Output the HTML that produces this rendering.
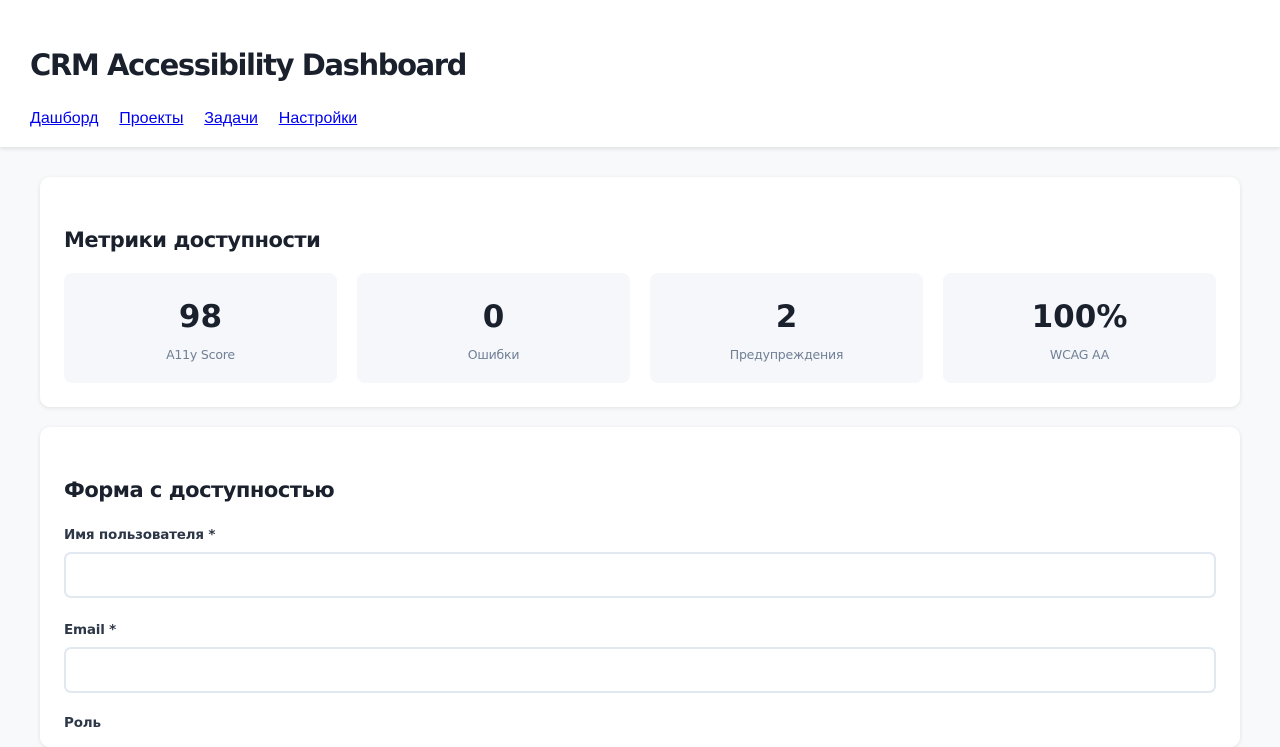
<!DOCTYPE html>
<html><head><meta charset="utf-8"><style>
*{box-sizing:border-box;margin:0;padding:0}
body{width:1280px;height:720px;overflow:hidden;background:#f8f9fa;font-family:"DejaVu Sans","Liberation Sans",sans-serif;color:#1a202c}
header{background:#fff;height:147px;box-shadow:0 2px 4px rgba(0,0,0,.1);padding:0 30px;position:relative}
h1{position:absolute;top:45px;left:30px;font-size:29px;font-weight:bold;letter-spacing:-1.4px;line-height:40px}
nav{position:absolute;top:109px;left:30px;font-size:15px}
nav a{color:#0000ee;margin-right:16px;font-family:"Liberation Sans",sans-serif;font-size:16px;text-decoration:underline}
.card{position:absolute;left:40px;width:1200px;background:#fff;border-radius:10px;box-shadow:0 1px 4px rgba(0,0,0,.1)}
h2{position:absolute;left:24px;font-size:21px;font-weight:bold;letter-spacing:-0.5px}
.m{position:absolute;top:96px;width:273px;height:110px;background:#f5f7fa;border-radius:8px;text-align:center}
.m b{display:block;margin-top:26px;font-size:31px;line-height:36px}
.m span{display:block;margin-top:12px;font-size:12.5px;color:#718096;letter-spacing:-0.2px}
label{position:absolute;left:24px;font-size:13.5px;font-weight:bold;color:#2d3748;letter-spacing:-0.2px}
.in{position:absolute;left:24px;width:1152px;height:46px;border:2px solid #e2e8f0;border-radius:7px}
</style></head><body>
<header><h1>CRM Accessibility Dashboard</h1>
<nav><a>Дашборд</a> <a>Проекты</a> <a>Задачи</a> <a>Настройки</a></nav></header>
<div class="card" style="top:177px;height:230px">
<h2 style="top:51px">Метрики доступности</h2>
<div class="m" style="left:24px"><b>98</b><span>A11y Score</span></div>
<div class="m" style="left:317px"><b>0</b><span>Ошибки</span></div>
<div class="m" style="left:610px"><b>2</b><span>Предупреждения</span></div>
<div class="m" style="left:903px"><b>100%</b><span>WCAG AA</span></div>
</div>
<div class="card" style="top:427px;height:320px">
<h2 style="top:51px">Форма с доступностью</h2>
<label style="top:100px">Имя пользователя *</label>
<div class="in" style="top:125px"></div>
<label style="top:195px">Email *</label>
<div class="in" style="top:220px"></div>
<label style="top:288px">Роль</label>
</div>
</body></html>
